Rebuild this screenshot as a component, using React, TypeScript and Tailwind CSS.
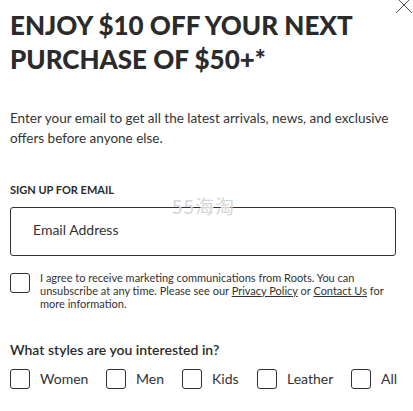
import React from "react";

const Box = () => (
  <span className="block w-[20px] h-[20px] shrink-0 border border-[#333] rounded-[3px] bg-white" />
);

export default function App() {
  const styles = [
    { label: "Women", w: "w-[96px]" },
    { label: "Men", w: "w-[76px]" },
    { label: "Kids", w: "w-[75px]" },
    { label: "Leather", w: "w-[94px]" },
    { label: "All", w: "w-[50px]" },
  ];
  return (
    <div
      className="relative w-[413px] h-[411px] overflow-hidden bg-white text-[#333] px-[10px]"
      style={{ fontFamily: "Lato, 'Noto Sans', sans-serif" }}
    >
      <svg
        className="absolute left-[395px] top-[-4px]"
        width="18"
        height="18"
        viewBox="0 0 18 18"
      >
        <line x1="1" y1="1" x2="17" y2="17" stroke="#555" strokeWidth="1" />
        <line x1="17" y1="1" x2="1" y2="17" stroke="#555" strokeWidth="1" />
      </svg>

      <h1 className="pt-[8px] text-[26px] leading-[34px] font-black text-[#2b2b2b]">
        ENJOY $10 OFF YOUR NEXT
        <br />
        PURCHASE OF $50+*
      </h1>

      <p className="mt-[32px] text-[13.5px] leading-[20px] text-[#333] whitespace-nowrap">
        Enter your email to get all the latest arrivals, news, and exclusive
        <br />
        offers before anyone else.
      </p>

      <div className="mt-[34px] text-[11px] leading-[16px] font-bold text-[#2b2b2b]">
        SIGN UP FOR EMAIL
      </div>

      <div className="mt-[9px] h-[49px] w-[386px] border border-[#333] rounded-[3px] flex items-center pl-[22px] pb-[4px] text-[14px] text-[#333]">
        Email Address
      </div>

      <div className="mt-[17px] flex gap-[10px]">
        <Box />
        <p className="text-[11px] leading-[13px] text-[#333] whitespace-nowrap mt-[-2px]">
          I agree to receive marketing communications from Roots. You can
          <br />
          unsubscribe at any time. Please see our{" "}
          <span className="underline">Privacy Policy</span> or{" "}
          <span className="underline">Contact Us</span> for
          <br />
          more information.
        </p>
      </div>

      <div className="mt-[30px] text-[14px] leading-[20px] font-semibold text-[#2b2b2b]">
        What styles are you interested in?
      </div>

      <div className="mt-[8px] flex">
        {styles.map((s) => (
          <div key={s.label} className={`${s.w} flex items-center gap-[10px] shrink-0`}>
            <Box />
            <span className="text-[14px] text-[#333]">{s.label}</span>
          </div>
        ))}
      </div>

      <div className="absolute left-[172px] top-[196px] text-[19px] leading-[20px] text-[#d6d6d6] tracking-[1px]" style={{ fontFamily: "'Noto Sans CJK SC', sans-serif" }}>
        55海淘
      </div>
    </div>
  );
}
